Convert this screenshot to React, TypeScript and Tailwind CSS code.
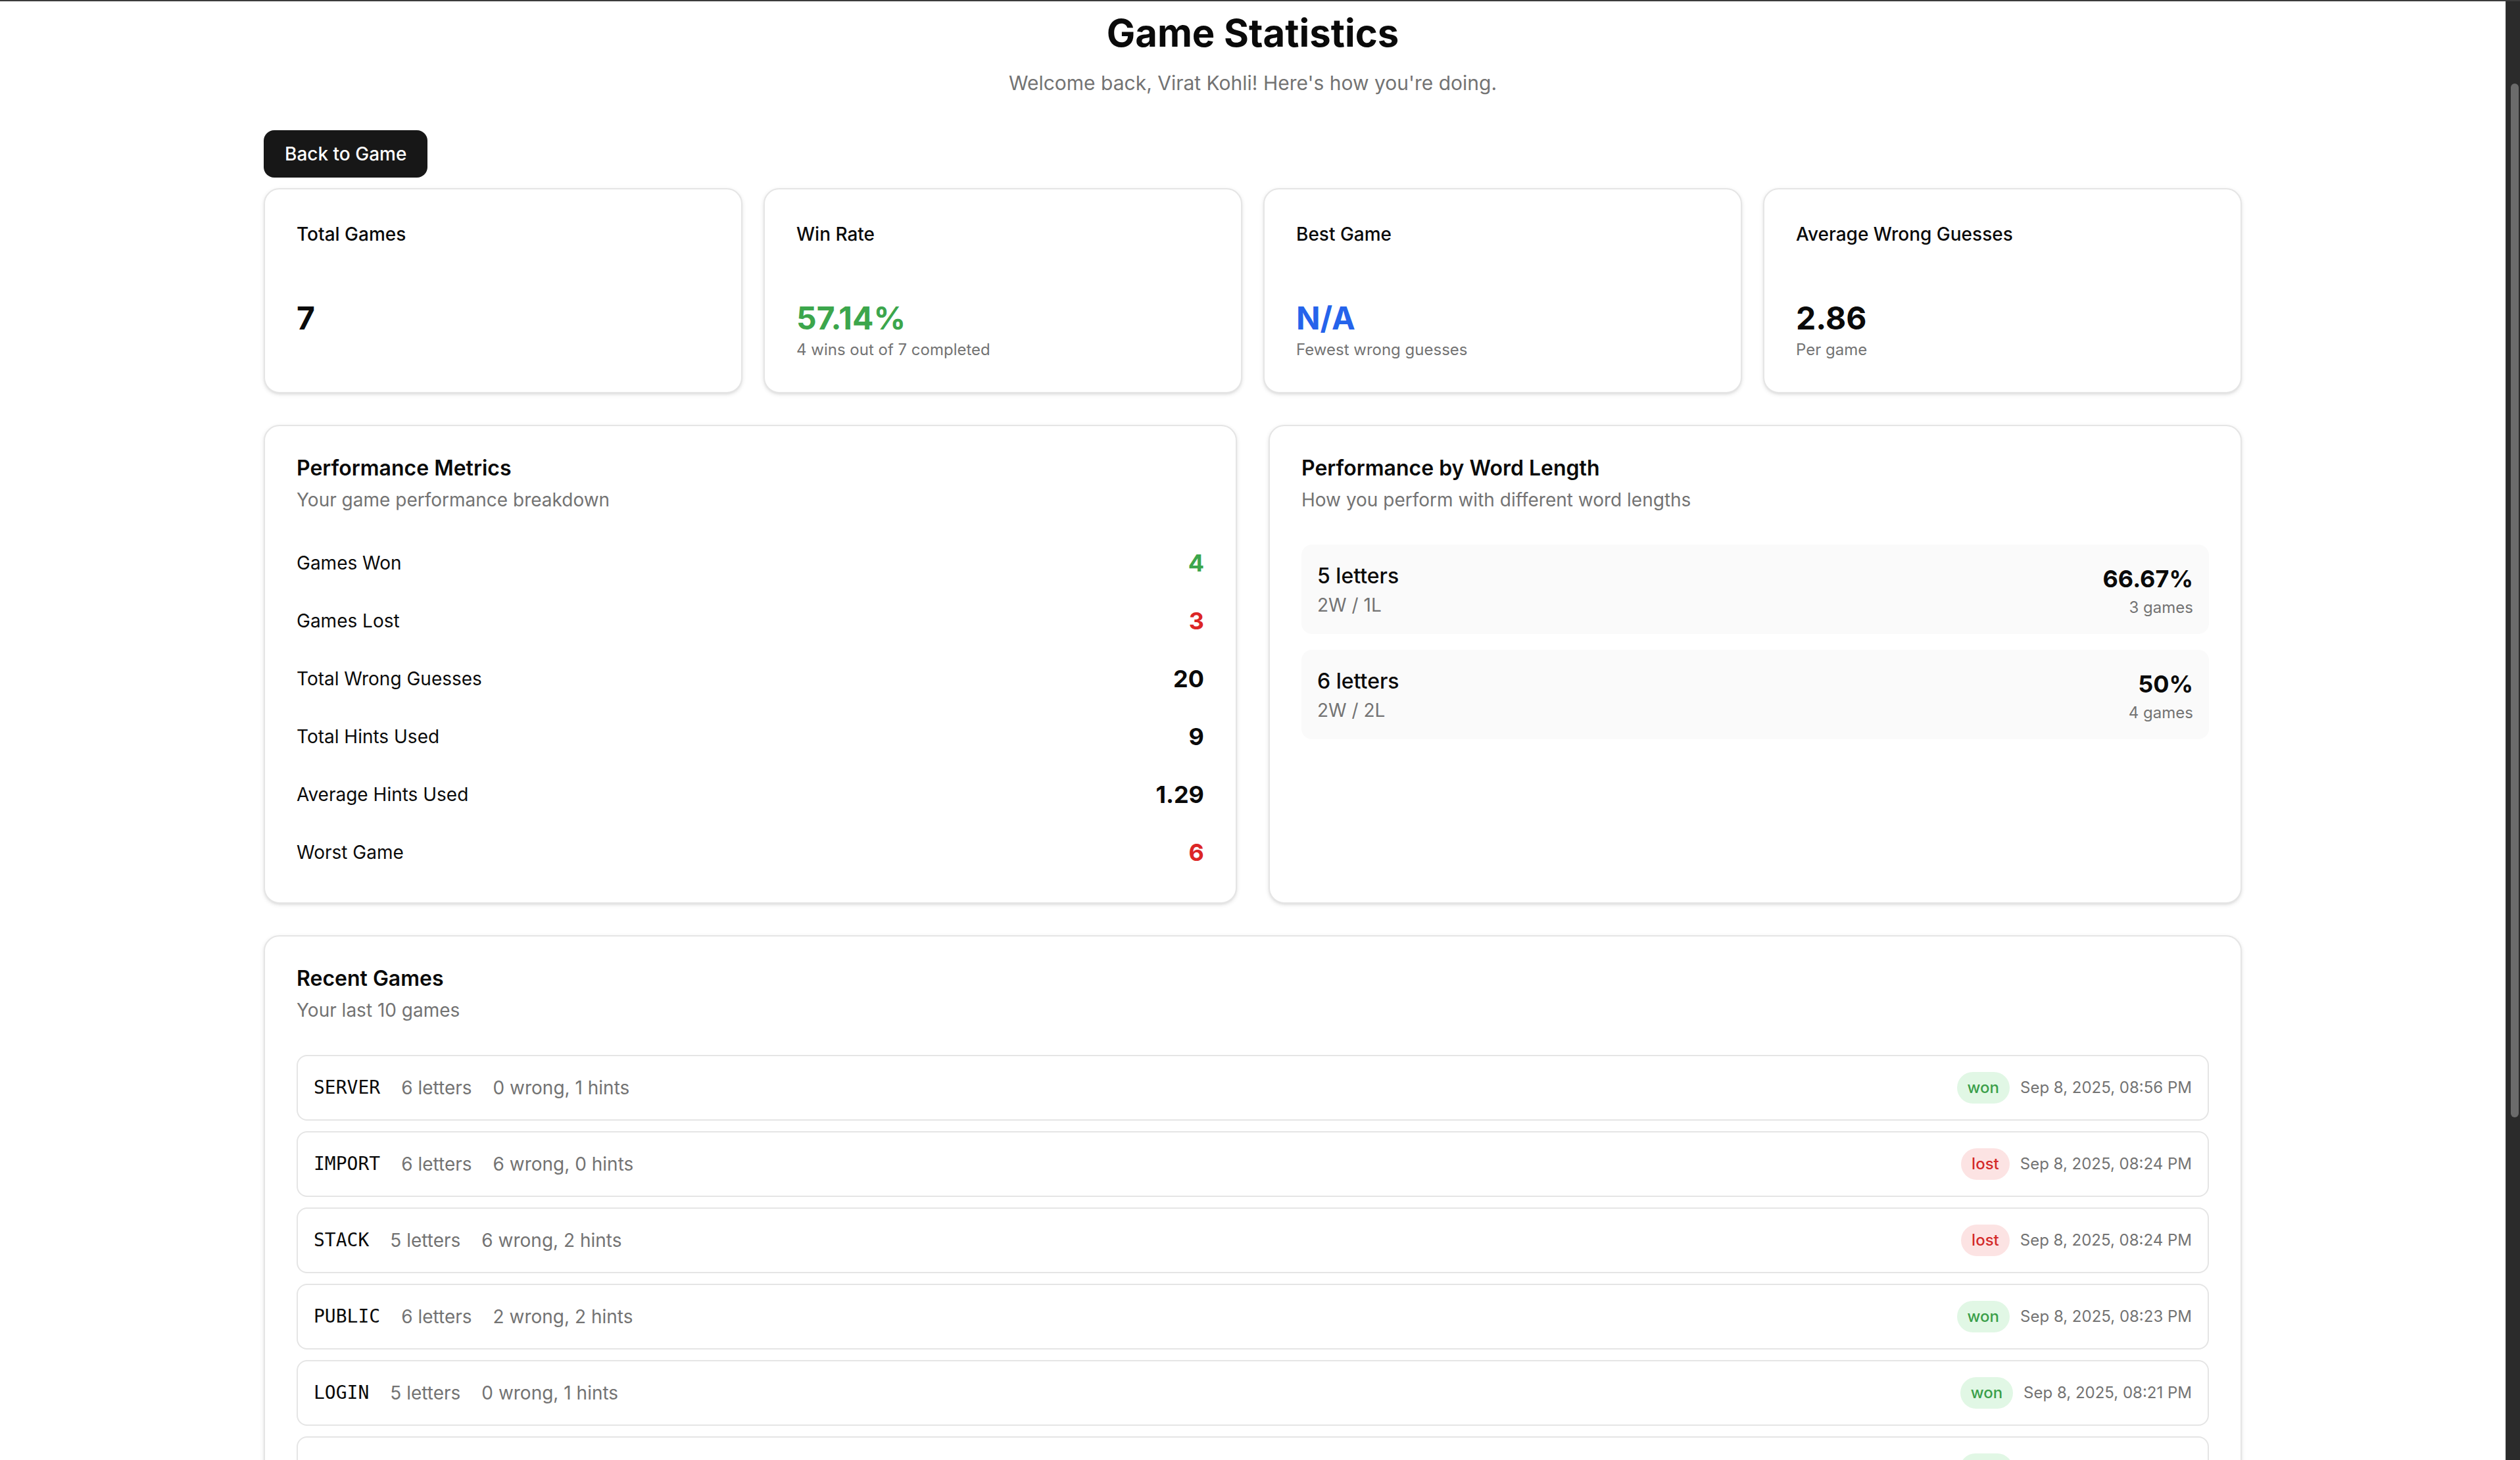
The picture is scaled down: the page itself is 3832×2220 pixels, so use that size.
import React from "react";

const stats = [
  { title: "Total Games", value: "7", color: "text-neutral-950", note: "" },
  { title: "Win Rate", value: "57.14%", color: "text-[#3ca64c]", note: "4 wins out of 7 completed" },
  { title: "Best Game", value: "N/A", color: "text-[#2563eb]", note: "Fewest wrong guesses" },
  { title: "Average Wrong Guesses", value: "2.86", color: "text-neutral-950", note: "Per game" },
];

const metrics = [
  { label: "Games Won", value: "4", color: "text-[#3ca64c]" },
  { label: "Games Lost", value: "3", color: "text-[#dc2626]" },
  { label: "Total Wrong Guesses", value: "20", color: "text-neutral-950" },
  { label: "Total Hints Used", value: "9", color: "text-neutral-950" },
  { label: "Average Hints Used", value: "1.29", color: "text-neutral-950" },
  { label: "Worst Game", value: "6", color: "text-[#dc2626]" },
];

const lengths = [
  { letters: 5, record: "2W / 1L", rate: "66.67%", games: 3 },
  { letters: 6, record: "2W / 2L", rate: "50%", games: 4 },
];

const games = [
  { word: "SERVER", letters: 6, wrong: 0, hints: 1, status: "won", date: "Sep 8, 2025, 08:56 PM" },
  { word: "IMPORT", letters: 6, wrong: 6, hints: 0, status: "lost", date: "Sep 8, 2025, 08:24 PM" },
  { word: "STACK", letters: 5, wrong: 6, hints: 2, status: "lost", date: "Sep 8, 2025, 08:24 PM" },
  { word: "PUBLIC", letters: 6, wrong: 2, hints: 2, status: "won", date: "Sep 8, 2025, 08:23 PM" },
  { word: "LOGIN", letters: 5, wrong: 0, hints: 1, status: "won", date: "Sep 8, 2025, 08:21 PM" },
  { word: "ARRAY", letters: 5, wrong: 0, hints: 1, status: "won", date: "Sep 8, 2025, 08:19 PM" },
  { word: "OBJECT", letters: 6, wrong: 6, hints: 2, status: "lost", date: "Sep 8, 2025, 08:17 PM" },
];

const Card = ({ children, className = "" }: { children: React.ReactNode; className?: string }) => (
  <div className={`rounded-xl border border-neutral-200 bg-white shadow-sm ${className}`}>{children}</div>
);

const CardHeader = ({ title, description }: { title: string; description: string }) => (
  <div className="px-6 flex flex-col gap-1.5">
    <div className="text-base leading-none font-semibold">{title}</div>
    <div className="text-sm text-neutral-500">{description}</div>
  </div>
);

const App = () => {
  return (
    <div className="h-screen w-full overflow-hidden bg-white border-t-2 border-[#3c3c3c] flex text-neutral-950 font-[Inter,'Liberation_Sans',sans-serif]">
      <main className="flex-1 min-w-0 overflow-hidden">
        <div className="[zoom:2]">
          <div className="max-w-[1536px] mx-auto px-4 pt-[6px]">
            <div className="text-center">
              <h1 className="text-[29px] leading-9 font-bold">Game Statistics</h1>
              <p className="mt-2 text-[15px] leading-6 text-neutral-500">
                Welcome back, Virat Kohli! Here's how you're doing.
              </p>
            </div>

            <div className="mt-6 mb-2">
              <button className="h-9 px-4 rounded-lg bg-[#171717] text-white text-sm font-medium">
                Back to Game
              </button>
            </div>

            <div className="grid grid-cols-4 gap-4 mb-6">
              {stats.map((s) => (
                <Card key={s.title} className="py-6">
                  <div className="px-6 text-sm leading-5 font-medium">{s.title}</div>
                  <div className="px-6 mt-[38px]">
                    <div className={`text-2xl font-bold ${s.color}`}>{s.value}</div>
                    {s.note && <p className="text-xs text-neutral-500">{s.note}</p>}
                  </div>
                </Card>
              ))}
            </div>

            <div className="grid grid-cols-2 gap-6 mb-6">
              <Card className="py-6 flex flex-col gap-6">
                <CardHeader title="Performance Metrics" description="Your game performance breakdown" />
                <div className="px-6 space-y-4">
                  {metrics.map((m) => (
                    <div key={m.label} className="flex items-center justify-between">
                      <span className="text-sm">{m.label}</span>
                      <span className={`text-lg font-bold ${m.color}`}>{m.value}</span>
                    </div>
                  ))}
                </div>
              </Card>

              <Card className="py-6 flex flex-col gap-6">
                <CardHeader title="Performance by Word Length" description="How you perform with different word lengths" />
                <div className="px-6 space-y-3">
                  {lengths.map((l) => (
                    <div key={l.letters} className="flex items-center justify-between rounded-lg bg-neutral-50 p-3">
                      <div>
                        <div className="text-base font-medium">{l.letters} letters</div>
                        <div className="text-sm text-neutral-500">{l.record}</div>
                      </div>
                      <div className="text-right">
                        <div className="text-lg font-bold">{l.rate}</div>
                        <div className="text-xs text-neutral-500">{l.games} games</div>
                      </div>
                    </div>
                  ))}
                </div>
              </Card>
            </div>

            <Card className="py-6 flex flex-col gap-6">
              <CardHeader title="Recent Games" description="Your last 10 games" />
              <div className="px-6 space-y-2">
                {games.map((g, i) => (
                  <div key={i} className="flex items-center justify-between rounded-lg border border-neutral-200 p-3">
                    <div className="flex items-center gap-4 text-sm">
                      <span className="font-medium font-['DejaVu_Sans_Mono',monospace]">{g.word}</span>
                      <span className="text-neutral-500">{g.letters} letters</span>
                      <span className="text-neutral-500">
                        {g.wrong} wrong, {g.hints} hints
                      </span>
                    </div>
                    <div className="flex items-center gap-2">
                      <span
                        className={
                          g.status === "won"
                            ? "rounded-full px-2 py-1 text-xs font-medium bg-[#e1f7e5] text-[#3a9f4a]"
                            : "rounded-full px-2 py-1 text-xs font-medium bg-[#fce3e3] text-[#d42a2a]"
                        }
                      >
                        {g.status}
                      </span>
                      <span className="text-xs text-neutral-500">{g.date}</span>
                    </div>
                  </div>
                ))}
              </div>
            </Card>
          </div>
        </div>
      </main>

      <div className="w-[22px] shrink-0 bg-[#2b2b2b] border-l border-[#3a3a3a] flex flex-col pt-[125px]">
        <div className="ml-[7px] w-[12px] h-[1572px] rounded-full bg-[#6b6b6b]" />
      </div>
    </div>
  );
};

export default App;
